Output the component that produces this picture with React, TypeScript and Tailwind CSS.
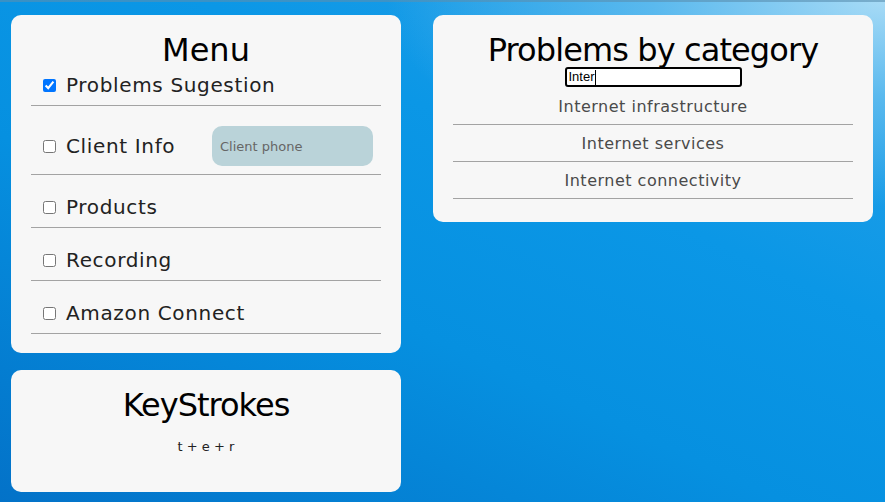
import React from "react";

const font = { fontFamily: '"DejaVu Sans", "Open Sans", sans-serif' };

const menuItems = ["Products", "Recording", "Amazon Connect"];
const problems = ["Internet infrastructure", "Internet services", "Internet connectivity"];

export default function App() {
  return (
    <div
      className="relative w-[885px] h-[502px] overflow-hidden bg-[linear-gradient(205deg,#2aa2e8_0%,#0b97e6_35%,#0690e0_60%,#0372c8_100%)]"
      style={font}
    >
      {/* wallpaper highlight */}
      <div className="absolute inset-0 bg-[radial-gradient(ellipse_75%_55%_at_100%_0%,#a8dbf6_0%,#5ab9ee_35%,transparent_75%)]" />
      <div className="absolute inset-x-0 top-0 h-[2px] bg-[#5a8fb0]/60" />

      <div className="relative flex items-start pl-[11px] pt-[15px]">
        {/* left column */}
        <div className="flex flex-col w-[390px] gap-[17px]">
          <div className="bg-[#f7f7f7] rounded-[10px] pt-[15px] pb-[19px] px-[20px]">
            <h2 className="text-center text-[32px] leading-[40px] text-black">Menu</h2>
            <div className="flex items-center pt-[3px] pb-[8px] border-b border-[#a3a3a3]">
              <input type="checkbox" defaultChecked className="ml-[12px] w-[13px] h-[13px]" />
              <span className="ml-[10px] text-[20px] leading-[24px] tracking-[0.65px] text-[#222]">Problems Sugestion</span>
            </div>
            <div className="flex items-center pt-[20px] pb-[8px] border-b border-[#a3a3a3]">
              <input type="checkbox" className="ml-[12px] w-[13px] h-[13px]" />
              <span className="ml-[10px] text-[20px] leading-[24px] tracking-[0.65px] text-[#222]">Client Info</span>
              <input
                placeholder="Client phone"
                className="ml-auto mr-[8px] w-[161px] h-[40px] rounded-[10px] bg-[#bad3d9] pl-[8px] text-[13px] text-[#333] placeholder:text-[#666] outline-none"
              />
            </div>
            {menuItems.map((item) => (
              <div key={item} className="flex items-center pt-[20px] pb-[8px] border-b border-[#a3a3a3]">
                <input type="checkbox" className="ml-[12px] w-[13px] h-[13px]" />
                <span className="ml-[10px] text-[20px] leading-[24px] tracking-[0.65px] text-[#222]">{item}</span>
              </div>
            ))}
          </div>

          <div className="bg-[#f7f7f7] rounded-[10px] h-[122px] pt-[15px] flex flex-col items-center">
            <h2 className="text-[32px] leading-[40px] tracking-[-1px] text-black">KeyStrokes</h2>
            <div className="mt-[13px] text-[13px] leading-[18px] text-[#222]">t + e + r</div>
          </div>
        </div>

        {/* right card */}
        <div className="ml-[32px] w-[440px] bg-[#f7f7f7] rounded-[10px] pt-[15px] pb-[23px] px-[20px]">
          <h2 className="text-center text-[32px] leading-[40px] tracking-[-0.9px] text-black">Problems by category</h2>
          <div className="flex justify-center -mt-[3px]">
            <div
              className="w-[177px] h-[20px] border-2 border-black rounded-[3px] bg-white flex items-center pl-[2px] text-[13px] text-black"
              style={{ fontFamily: '"Liberation Sans", Arial, sans-serif' }}
            >
              Inter
              <span className="inline-block w-[1px] h-[15px] bg-black" />
            </div>
          </div>
          <div className="mt-[1px]">
            {problems.map((p) => (
              <div
                key={p}
                className="h-[37px] flex items-center justify-center pt-[2px] border-b border-[#a3a3a3] text-[16px] tracking-[0.5px] text-[#4a4a4a]"
              >
                {p}
              </div>
            ))}
          </div>
        </div>
      </div>
    </div>
  );
}
